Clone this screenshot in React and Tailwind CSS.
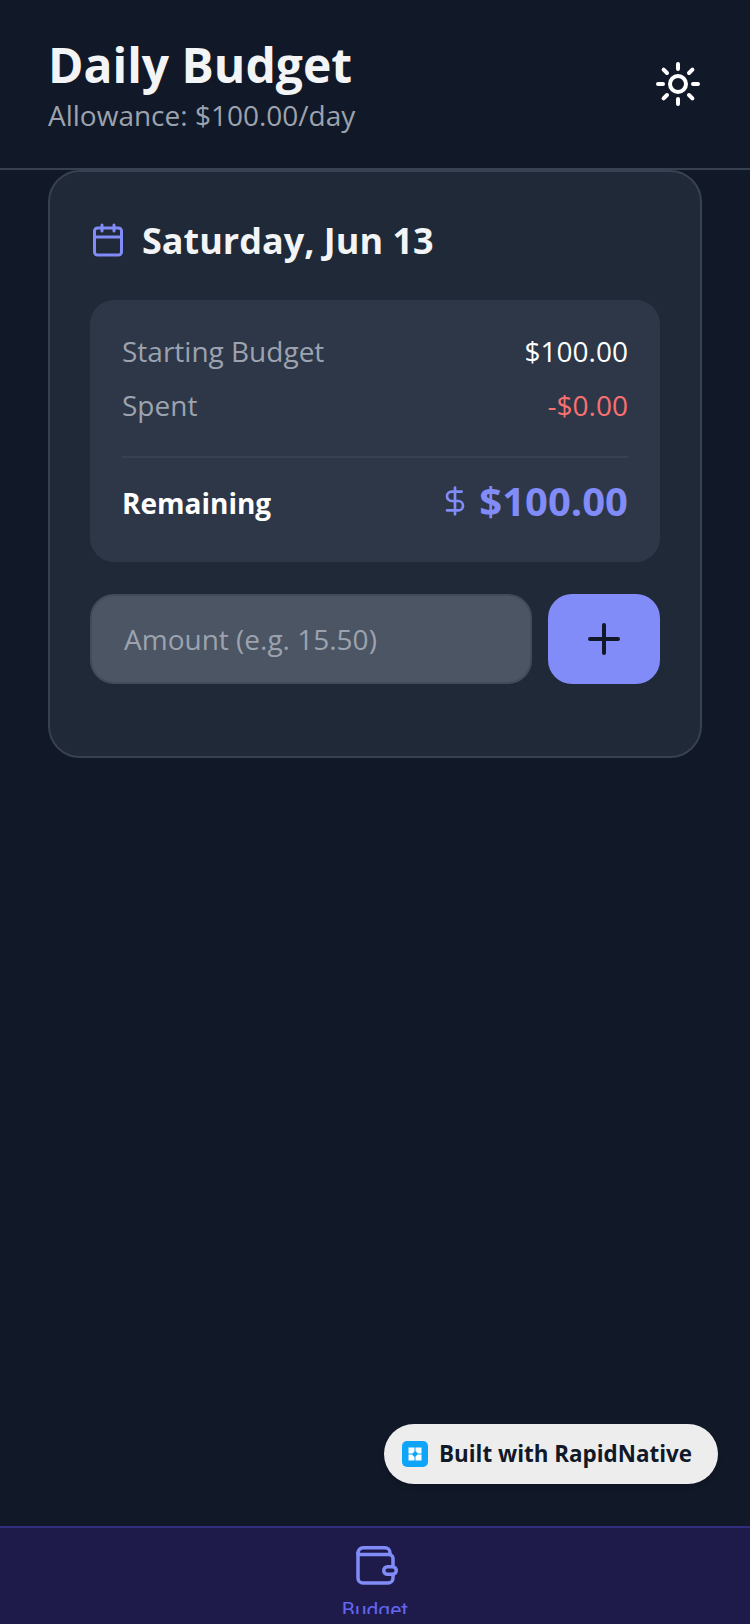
import { Calendar, DollarSign, Plus } from 'lucide-react';

const openSans = 'font-["Open_Sans",sans-serif]';

const SunIcon = () => (
  <svg className="-mr-[1px] -mt-[2px]" width="50" height="50" viewBox="0 0 50 50" fill="none" stroke="#ffffff" strokeWidth="4" strokeLinecap="round">
    <circle cx="25" cy="25" r="8" />
    <path d="M25 5v5M25 40v5M39.400 10.600l-3.400 3.400M14 36l-3.400 3.400M45 25h-5M10 25H5M39.400 39.400L36 36M14 14l-3.400-3.400" />
  </svg>
);

const WalletIcon = () => (
  <svg className="shrink-0" width="46" height="46" viewBox="0 0 46 46" fill="none" stroke="#818cf8" strokeWidth="3.5" strokeLinecap="round" strokeLinejoin="round">
    <path d="M6 9a5.250 5.250 0 0 1 5.250-5.250H33a5 5 0 0 1 5 5V10.500" />
    <path d="M6 9V34a5 5 0 0 0 5 5H36a5 5 0 0 0 5-5V30.500" />
    <path d="M6 9a1.500 1.500 0 0 0 1.500 1.500H37a4 4 0 0 1 4 4V22.500" />
    <rect x="31.750" y="22.750" width="12.500" height="7.500" rx="3.750" />
  </svg>
);

const BadgeLogo = () => (
  <svg width="26" height="26" viewBox="0 0 26 26">
    <rect width="26" height="26" rx="5" fill="#0ea5f9" />
    <path d="M6.500 6.500h6v4l-2 2h-4zM13.500 6.500h6v6h-3.500l-2.500-2.500zM6.500 13.500h3.500l2.500 2.500v3.500h-6zM15.500 13.500h4v6h-6v-4z" fill="#ffffff" />
  </svg>
);

const Row = ({ label, value, valueClass }) => (
  <div className="flex items-center justify-between">
    <span className="text-[28px] leading-[38px] text-[#9ca3af]">{label}</span>
    <span className={`text-[28px] leading-[38px] ${valueClass}`}>{value}</span>
  </div>
);

export default function App() {
  return (
    <div className={`relative flex h-[1624px] flex-col overflow-hidden bg-[#111827] ${openSans}`}>
      <header className="flex h-[170px] items-center justify-between border-b-2 border-[#374151] px-[48px] pt-[2px]">
        <div>
          <h1 className="text-[48px] font-bold leading-[58px] text-[#f3f4f6]">Daily Budget</h1>
          <p className="mt-[2px] text-[28px] leading-[38px] text-[#9ca3af]">Allowance: $100.00/day</p>
        </div>
        <SunIcon />
      </header>

      <main className="flex-1 px-[48px]">
        <section className="rounded-[32px] border-2 border-[#374151] bg-[#1f2937] px-[40px] pb-[72px] pt-[40px]">
          <div className="flex h-[56px] items-center gap-[16px]">
            <Calendar size={36} color="#818cf8" strokeWidth={2} />
            <h2 className="mt-[2px] text-[36px] font-bold leading-[54px] text-[#f3f4f6]">Saturday, Jun 13</h2>
          </div>

          <div className="mt-[32px] rounded-[24px] bg-[#2d3748] p-[32px]">
            <div className="flex flex-col gap-[16px]">
              <Row label="Starting Budget" value="$100.00" valueClass="text-[#ffffff]" />
              <Row label="Spent" value="-$0.00" valueClass="text-[#f87171]" />
            </div>
            <div className="mt-[32px] border-t-2 border-[#374151] pt-[18px]">
              <div className="flex h-[54px] items-center justify-between">
                <span className="text-[28px] font-bold leading-[38px] text-[#ffffff]">Remaining</span>
                <div className="-mt-[4px] flex items-center gap-[8px] text-[#818cf8]">
                  <DollarSign size={32} strokeWidth={2} />
                  <span className="text-[40px] font-bold leading-[54px]">$100.00</span>
                </div>
              </div>
            </div>
          </div>

          <div className="mt-[32px] flex gap-[16px]">
            <div className="flex h-[90px] flex-1 items-center rounded-[24px] border-2 border-[#414b5a] bg-[#4b5563] px-[32px]">
              <span className="text-[28px] text-[#9ca3af]">Amount (e.g. 15.50)</span>
            </div>
            <button className="flex h-[90px] w-[112px] items-center justify-center rounded-[24px] bg-[#818cf8]">
              <Plus size={48} color="#111827" strokeWidth={2} />
            </button>
          </div>
        </section>
      </main>

      <div className="absolute left-[384px] top-[1424px] flex h-[60px] w-[334px] items-center gap-[11px] rounded-full bg-[#ededee] pl-[18px] shadow-md">
        <BadgeLogo />
        <span className="text-[22.4px] font-bold text-[#111827]">Built with RapidNative</span>
      </div>

      <nav className="h-[98px] shrink-0 border-t-2 border-[#312e81] bg-[#1e1b4b]">
        <div className="flex h-[86px] flex-col items-center overflow-hidden pt-[16px]">
          <WalletIcon />
          <span className='mt-[8px] shrink-0 font-["Roboto",sans-serif] text-[21px] leading-[24px] text-[#6366f1]'>Budget</span>
        </div>
      </nav>
    </div>
  );
}
